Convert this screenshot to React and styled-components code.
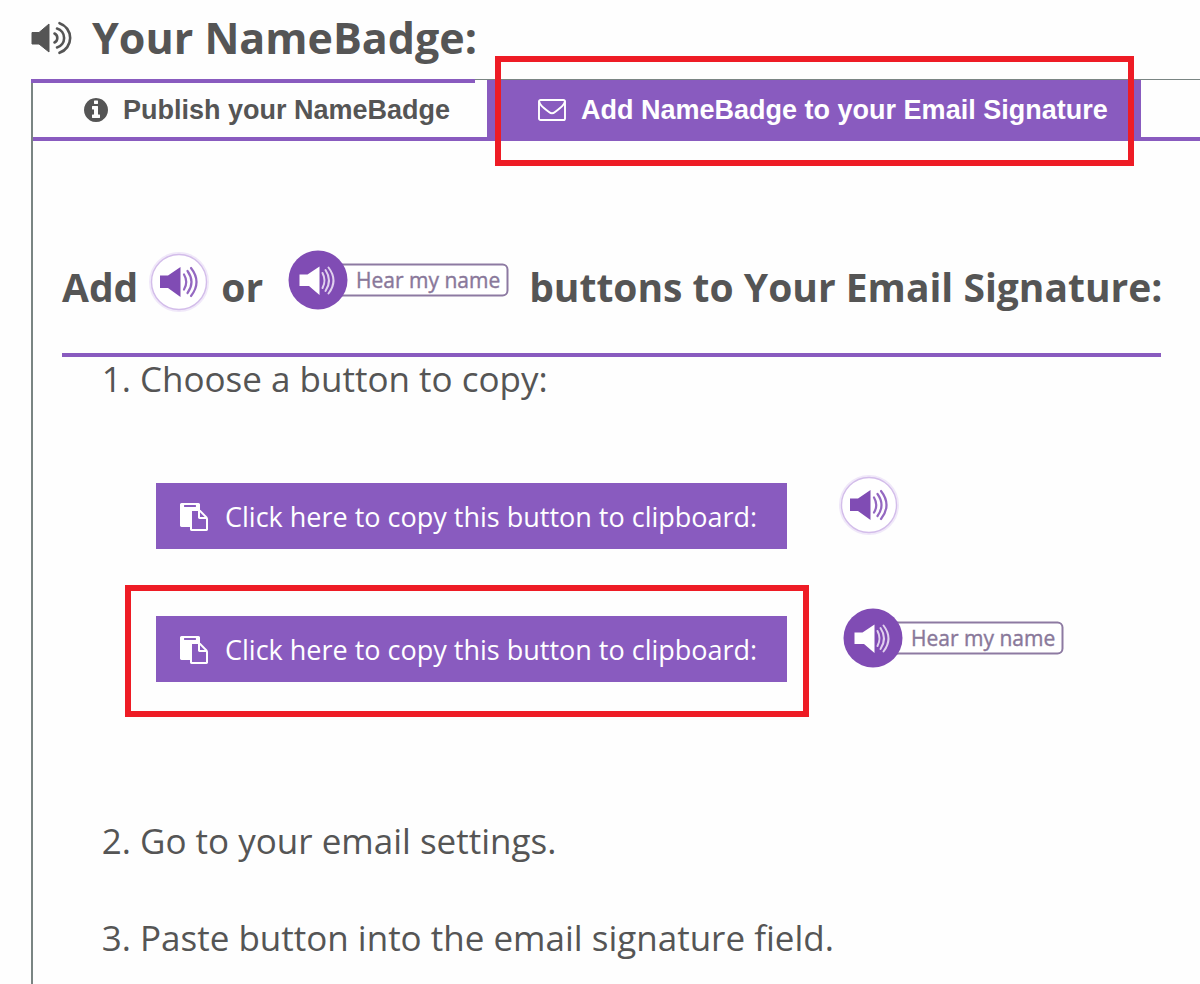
import React from "react";
import styled, { createGlobalStyle, css } from "styled-components";

const purple = "#895bbf";
const badgePurple = "#804cb4";
const ink = "#555555";
const rule = "#7a8583";
const red = "#ee1c25";

const GlobalStyle = createGlobalStyle`
  *, *::before, *::after { box-sizing: border-box; }
  body {
    margin: 0;
    background: #fefefe;
    color: ${ink};
    font-family: "Open Sans", "Noto Sans", sans-serif;
    overflow-x: hidden;
  }
`;

const Page = styled.main`
  display: flex;
  flex-direction: column;
  min-height: 100vh;
  padding: 8px 0 0 31px;
`;

const Title = styled.h1`
  display: flex;
  align-items: center;
  gap: 20px;
  margin: 0 0 11px;
  font-size: 43px;
  line-height: 60px;
  white-space: nowrap;
`;

const Panel = styled.section`
  flex: 1;
  border-left: 2px solid ${rule};
`;

const Tabs = styled.div`
  display: flex;
  height: 62px;
  border-top: 1px solid ${rule};
  border-bottom: 4px solid ${purple};
`;

const highlight = css`
  &::after {
    content: "";
    position: absolute;
    border: 6px solid ${red};
    pointer-events: none;
  }
`;

const Tab = styled.button`
  position: relative;
  display: flex;
  align-items: center;
  gap: 15px;
  border: 0;
  padding: 2px ${(p) => (p.$active ? 33 : 37)}px 0 51px;
  background: ${(p) => (p.$active ? purple : "#fefefe")};
  color: ${(p) => (p.$active ? "#ffffff" : ink)};
  font: bold 27px/32px "Liberation Sans", Arial, sans-serif;
  white-space: nowrap;

  ${(p) =>
    p.$active
      ? css`
          ${highlight}
          &::after {
            inset: -24px 7px -29px 8px;
          }
        `
      : css`
          &::before {
            content: "";
            position: absolute;
            inset: -1px 12px auto -2px;
            height: 4px;
            background: ${purple};
          }
        `}
`;

const Content = styled.div`
  padding: 106px 39px 28px 29px;
`;

const Subtitle = styled.h2`
  display: flex;
  align-items: flex-end;
  margin: 0;
  padding-bottom: 40px;
  border-bottom: 4px solid ${purple};
  font-size: 39px;
  line-height: 52px;
  white-space: nowrap;

  svg { margin: 0 11px 0 10px; }
  svg + span + svg { margin: 0 14px 0 20px; }
`;

const Steps = styled.ol`
  margin: 0;
  padding: 0 0 0 78px;
  font-size: 35px;
  line-height: 44px;
`;

const Step = styled.li`
  & + & { margin-top: 53px; }
`;

const Choices = styled.div`
  display: flex;
  flex-direction: column;
  gap: 45px;
  padding: 71px 0 73px 16px;
`;

const Choice = styled.div`
  display: flex;
  align-items: center;
  gap: 51px;
`;

const Sample = styled.div`
  height: 88px;
  padding-bottom: 22px;
  display: flex;
  align-items: center;
`;

const CopyButton = styled.button`
  position: relative;
  display: flex;
  align-items: center;
  gap: 17px;
  height: 66px;
  padding: 2px 30px 0 24px;
  border: 0;
  background: ${purple};
  color: #ffffff;
  font: 27px/38px "Open Sans", "Noto Sans", sans-serif;
  white-space: nowrap;

  ${(p) =>
    p.$marked &&
    css`
      ${highlight}
      &::after {
        inset: -31px -22px -35px -31px;
      }
    `}
`;

const Icon = styled.svg`
  display: block;
  flex: none;
`;

const VolumeIcon = () => (
  <Icon width="41" height="34" viewBox="0 -1 41 34" aria-hidden="true">
    <path d="M1 10.500h7L18 2v28L8 22H1z" fill="currentColor" strokeWidth="1" stroke="currentColor" strokeLinejoin="round" />
    <g fill="none" stroke="currentColor" strokeWidth="2.600" strokeLinecap="round">
      <path d="M23.500 11.500a5 5 0 0 1 0 9" />
      <path d="M26 6.500a9.900 9.900 0 0 1 0 19" />
      <path d="M28.500 1.200a15.600 15.600 0 0 1 0 29.600" />
    </g>
  </Icon>
);

const InfoIcon = () => (
  <Icon width="24" height="24" viewBox="128 128 1536 1536" fill="currentColor" aria-hidden="true">
    <path d="M1152 1376v-160q0-14-9-23t-23-9h-96v-512q0-14-9-23t-23-9h-320q-14 0-23 9t-9 23v160q0 14 9 23t23 9h96v320h-96q-14 0-23 9t-9 23v160q0 14 9 23t23 9h448q14 0 23-9t9-23zm-128-896v-160q0-14-9-23t-23-9h-192q-14 0-23 9t-9 23v160q0 14 9 23t23 9h192q14 0 23-9t9-23zm640 416q0 209-103 385.5t-279.5 279.5-385.5 103-385.5-103-279.5-279.5-103-385.5 103-385.5 279.5-279.5 385.5-103 385.5 103 279.5 279.5 103 385.5z" />
  </Icon>
);

const EnvelopeIcon = () => (
  <Icon width="28" height="22" viewBox="0 0 28 22" fill="none" stroke="currentColor" strokeWidth="1.900" strokeLinejoin="round" aria-hidden="true">
    <rect x="1" y="1" width="26" height="20" rx="1.600" />
    <path d="M1.200 2.500C1.500 5.500 4 7.500 11 13Q14 15.600 17 13C24 7.500 26.500 5.500 26.800 2.500" />
  </Icon>
);

const PasteIcon = () => (
  <Icon width="28" height="28" viewBox="0 0 1792 1792" fill="currentColor" aria-hidden="true">
    <path d="M768 1664h896v-640h-416q-40 0-68-28t-28-68v-416h-384v1152zm256-1440v-64q0-13-9.500-22.500t-22.500-9.500h-704q-13 0-22.500 9.500t-9.500 22.500v64q0 13 9.500 22.500t22.500 9.500h704q13 0 22.500-9.500t9.500-22.500zm256 672h299l-299-299v299zm512 128v672q0 40-28 68t-68 28h-960q-40 0-68-28t-28-68v-160h-544q-40 0-68-28t-28-68v-1344q0-40 28-68t68-28h1088q40 0 68 28t28 68v328q21 13 36 28l408 408q28 28 48 76t20 88z" />
  </Icon>
);

const RoundBadge = () => (
  <Icon width="62" height="62" viewBox="0 0 62 62" role="img" aria-label="Speaker button">
    <circle cx="31" cy="31" r="28" fill="#fff" stroke="#f0e8f9" strokeWidth="4" />
    <circle cx="31" cy="31" r="27.500" fill="#fff" stroke="#d3bdea" strokeWidth="1.400" />
    <path d="M12 24.500h8L32.500 16v30L20 37H12z" fill={badgePurple} />
    <g fill="none" stroke="#9468c1" strokeWidth="2.200" strokeLinecap="round">
      <path d="M36 23.500q4.500 7.500 0 15" />
      <path d="M39.500 20q8 11 0 22" />
      <path d="M43 17q11 14 0 28" />
    </g>
  </Icon>
);

const PillText = styled.text`
  font: 21px "Open Sans", "Noto Sans", sans-serif;
`;

const PillBadge = () => (
  <Icon width="232" height="66" viewBox="0 0 232 66" role="img" aria-label="Hear my name button">
    <rect x="40" y="17.500" width="184.500" height="31" rx="5" fill="#fff" stroke="#8d7aa2" strokeWidth="2" />
    <circle cx="35" cy="33" r="29.500" fill={badgePurple} />
    <path d="M16.500 27.500h8L36.500 19.500v28.500L26 39H16.500z" fill="#ffffff" />
    <g fill="none" stroke="#e0d0ee" strokeWidth="2" strokeLinecap="round">
      <path d="M39.500 26q4 7.500 0 15" />
      <path d="M42.500 23q7 10.500 0 21" />
      <path d="M45.500 20.500q10 13 0 26" />
    </g>
    <PillText x="73" y="41" fill="#89789a" stroke="#89789a" strokeWidth="0.400">Hear my name</PillText>
  </Icon>
);

const copyLabel = "Click here to copy this button to clipboard:";

export default function App() {
  return (
    <>
      <GlobalStyle />
      <Page>
        <Title>
          <VolumeIcon />
          Your NameBadge:
        </Title>
        <Panel>
          <Tabs role="tablist">
            <Tab type="button" role="tab" aria-selected="false">
              <InfoIcon />
              Publish your NameBadge
            </Tab>
            <Tab type="button" role="tab" aria-selected="true" $active>
              <EnvelopeIcon />
              Add NameBadge to your Email Signature
            </Tab>
          </Tabs>
          <Content role="tabpanel">
            <Subtitle>
              <span>Add</span>
              <RoundBadge />
              <span>or</span>
              <PillBadge />
              <span>buttons to Your Email Signature:</span>
            </Subtitle>
            <Steps>
              <Step>
                Choose a button to copy:
                <Choices>
                  <Choice>
                    <CopyButton type="button">
                      <PasteIcon />
                      {copyLabel}
                    </CopyButton>
                    <Sample>
                      <RoundBadge />
                    </Sample>
                  </Choice>
                  <Choice>
                    <CopyButton type="button" $marked>
                      <PasteIcon />
                      {copyLabel}
                    </CopyButton>
                    <Sample>
                      <PillBadge />
                    </Sample>
                  </Choice>
                </Choices>
              </Step>
              <Step>Go to your email settings.</Step>
              <Step>Paste button into the email signature field.</Step>
            </Steps>
          </Content>
        </Panel>
      </Page>
    </>
  );
}
